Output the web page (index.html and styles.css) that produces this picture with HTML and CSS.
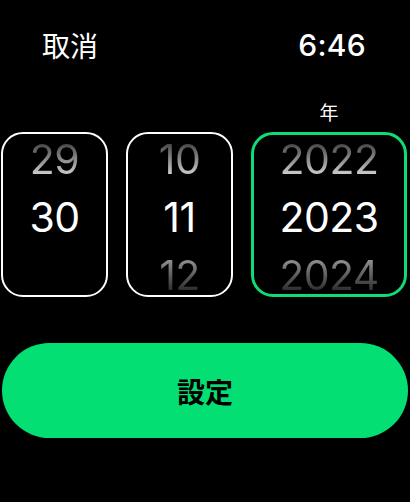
FILE: index.html
```html
<!DOCTYPE html>
<html lang="ja">
<head>
<meta charset="utf-8">
<link rel="stylesheet" href="styles.css">
</head>
<body>
<div class="screen">
  <header class="top">
    <span class="cancel">取消</span>
    <span class="clock">6:46</span>
  </header>
  <div class="picker">
    <div class="label"></div>
    <div class="label"></div>
    <div class="label">年</div>
    <div class="wheel">
      <div class="item prev">29</div>
      <div class="item cur">30</div>
      <div class="item next"></div>
    </div>
    <div class="wheel">
      <div class="item prev">10</div>
      <div class="item cur">11</div>
      <div class="item next">12</div>
    </div>
    <div class="wheel active">
      <div class="item prev">2022</div>
      <div class="item cur">2023</div>
      <div class="item next">2024</div>
    </div>
  </div>
  <button class="set">設定</button>
</div>
</body>
</html>
```
FILE: styles.css
```css
html, body {
  margin: 0;
  padding: 0;
  background: #000;
}
body {
  width: 410px;
  height: 502px;
  overflow: hidden;
  font-family: "Inter", "Noto Sans CJK JP", sans-serif;
  color: #fff;
}
.screen {
  display: flex;
  flex-direction: column;
}
.top {
  display: flex;
  justify-content: space-between;
  align-items: center;
  padding: 27px 44px 0 42px;
  height: 36px;
}
.cancel {
  font-family: "Noto Sans CJK JP", sans-serif;
  font-size: 28px;
  line-height: 36px;
}
.clock {
  font-size: 30px;
  font-weight: 500;
  line-height: 36px;
  letter-spacing: 0.3px;
}
.picker {
  display: grid;
  grid-template-columns: 107px 107px 156px;
  grid-template-rows: 30px 165px;
  column-gap: 18px;
  padding: 39px 0 0 1px;
}
.label {
  font-family: "Noto Sans CJK JP", sans-serif;
  font-size: 19px;
  line-height: 24px;
  text-align: center;
  align-self: start;
  margin-top: -2px;
}
.wheel {
  box-sizing: border-box;
  border: 2px solid #fff;
  border-radius: 22px;
  overflow: hidden;
  display: flex;
  flex-direction: column;
  justify-content: center;
  align-items: center;
  padding-top: 4px;
}
.wheel.active {
  border: 3px solid #0fdc74;
}
.item {
  height: 58px;
  line-height: 58px;
  flex: none;
  font-size: 41px;
  font-weight: 400;
  text-align: center;
  letter-spacing: -0.5px;
}
.item.prev {
  background: linear-gradient(to bottom, #4a4a4a 25%, #c8c8c8 75%);
  -webkit-background-clip: text;
  background-clip: text;
  color: transparent;
}
.item.next {
  background: linear-gradient(to bottom, #8e8e8e 25%, #303030 75%);
  -webkit-background-clip: text;
  background-clip: text;
  color: transparent;
}
.set {
  margin: 46px 2px 0 2px;
  height: 95px;
  border: none;
  border-radius: 48px;
  background: #03df72;
  color: #000;
  font-family: "Noto Sans CJK JP", sans-serif;
  font-size: 28px;
  font-weight: 700;
  padding: 0;
}
```
